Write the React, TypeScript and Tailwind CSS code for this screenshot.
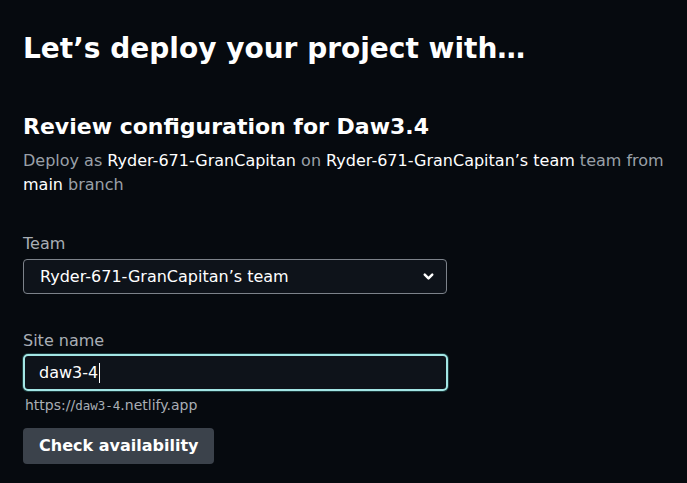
import { ChevronDown } from 'lucide-react';

export default function App() {
  return (
    <div className="min-h-screen bg-[#060a0f] px-[23px] pt-[29px] font-['DejaVu_Sans',sans-serif] text-white">
      <h1 className="text-[28px] font-bold leading-[40px]">Let’s deploy your project with…</h1>

      <section className="mt-[43px]">
        <h2 className="text-[22px] font-bold leading-[30px]">Review configuration for Daw3.4</h2>
        <p className="mt-[7px] text-[16px] leading-[24px] text-[#9aa0a8]">
          Deploy as <span className="text-white">Ryder-671-GranCapitan</span> on{' '}
          <span className="text-white">Ryder-671-GranCapitan’s team</span> team from{' '}
          <span className="text-white">main</span> branch
        </p>

        <div className="mt-[37px] w-[424px]">
          <label className="block text-[16px] leading-[20px] text-[#a9aeb5]">Team</label>
          <div className="mt-[5px] flex h-[35px] items-center justify-between rounded-[4px] border border-[#7c828a] bg-[#0e131a] pl-[16px] pr-[10px]">
            <span className="text-[16px] text-white">Ryder-671-GranCapitan’s team</span>
            <ChevronDown className="h-[15px] w-[15px] text-white" strokeWidth={4} />
          </div>
        </div>

        <div className="mt-[37px] w-[425px]">
          <label className="block text-[16px] leading-[20px] text-[#a9aeb5]">Site name</label>
          <div className="mt-[3px] flex h-[37px] items-center rounded-[5px] border-2 border-[#a3e6e5] bg-[#0e131a] pl-[14px] shadow-[0_0_0_1px_#1c3b3d]">
            <span className="text-[16px] text-white">daw3-4</span>
            <span className="ml-[1px] h-[20px] w-[1px] bg-white" />
          </div>
          <p className="mt-[5px] pl-[2px] text-[14px] leading-[18px] text-[#a9aeb5]">
            https://<span className="font-['DejaVu_Sans_Mono',monospace] text-[12.5px]">daw3-4</span>.netlify.app
          </p>
        </div>

        <button
          type="button"
          className="mt-[13px] h-[36px] rounded-[4px] bg-[#3b424b] px-[16px] text-[16px] font-bold text-white"
        >
          Check availability
        </button>
      </section>
    </div>
  );
}
